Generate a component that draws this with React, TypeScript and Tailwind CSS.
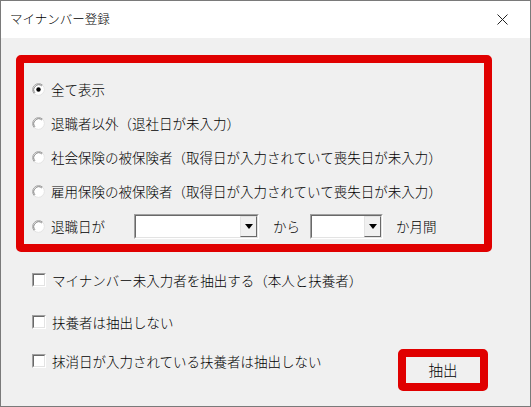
const RED = "border-[#e00000]";

const RADIO_ROWS = [
  "全て表示",
  "退職者以外（退社日が未入力）",
  "社会保険の被保険者（取得日が入力されていて喪失日が未入力）",
  "雇用保険の被保険者（取得日が入力されていて喪失日が未入力）",
];

function Radio({ checked = false }: { checked?: boolean }) {
  return (
    <svg width="13" height="13" viewBox="0 0 13 13" className="shrink-0">
      <circle cx="6.5" cy="6.5" r="6" fill="#fff" />
      <path d="M2.26 10.74 A6 6 0 0 1 10.74 2.26" stroke="#a0a0a0" fill="none" />
      <path d="M10.74 2.26 A6 6 0 0 1 2.26 10.74" stroke="#e3e3e3" fill="none" />
      <path d="M3 9.9 A4.9 4.9 0 0 1 9.9 3" stroke="#696969" strokeWidth="0.8" fill="none" />
      {checked && <circle cx="6.5" cy="6.5" r="2.2" fill="#000" />}
    </svg>
  );
}

function Checkbox() {
  return (
    <div className="w-[14px] h-[14px] shrink-0 border border-t-[#a0a0a0] border-l-[#a0a0a0] border-r-white border-b-white">
      <div className="w-full h-full bg-white border border-t-[#696969] border-l-[#696969] border-r-[#e3e3e3] border-b-[#e3e3e3]" />
    </div>
  );
}

function Combo({ width }: { width: string }) {
  return (
    <div className={`flex h-[25px] ${width} border border-t-[#a0a0a0] border-l-[#a0a0a0] border-r-white border-b-white`}>
      <div className="flex flex-1 border border-t-[#696969] border-l-[#696969] border-r-[#e3e3e3] border-b-[#e3e3e3] bg-white">
        <div className="flex-1" />
        <div className="w-[17px] bg-[#f0f0f0] flex items-center justify-center border border-t-[#e3e3e3] border-l-[#e3e3e3] border-r-[#696969] border-b-[#696969]">
          <svg width="8" height="5" viewBox="0 0 8 5">
            <path d="M0 0 H8 L4 5 Z" fill="#000" />
          </svg>
        </div>
      </div>
    </div>
  );
}

export default function App() {
  return (
    <div className="w-[531px] h-[407px] flex flex-col border border-[#7a7a7a] bg-[#f0f0f0] text-black font-light font-['Noto_Sans_CJK_JP','Noto_Sans',sans-serif] text-[13.5px]">
      {/* title bar */}
      <div className="h-[37px] shrink-0 bg-white flex items-center justify-between pl-[9px] pr-[22px]">
        <span className="text-[12.5px]">マイナンバー登録</span>
        <svg width="11" height="11" viewBox="0 0 11 11">
          <path d="M0.5 0.5 L10.5 10.5 M10.5 0.5 L0.5 10.5" stroke="#222" strokeWidth="1" />
        </svg>
      </div>

      <div className="flex flex-col pt-[17px]">
        {/* extraction mode */}
        <div className={`ml-[15px] w-[476px] h-[197px] border-[8px] ${RED} rounded-[5px] flex flex-col gap-[10px] pt-[14px] pl-[8px]`}>
          {RADIO_ROWS.map((label, i) => (
            <div key={label} className="h-[24px] flex items-center gap-[6px]">
              <Radio checked={i === 0} />
              <span>{label}</span>
            </div>
          ))}
          <div className="h-[25px] mt-[1px] flex items-center">
            <Radio />
            <span className="ml-[6px] w-[83px]">退職日が</span>
            <Combo width="w-[125px]" />
            <span className="ml-[14px] w-[37px]">から</span>
            <Combo width="w-[73px]" />
            <span className="ml-[13px]">か月間</span>
          </div>
        </div>

        <div className="mt-[16px] pl-[31px] h-[24px] flex items-center gap-[6px]">
          <Checkbox />
          <span>マイナンバー未入力者を抽出する（本人と扶養者）</span>
        </div>
        <div className="mt-[18px] pl-[31px] h-[24px] flex items-center gap-[6px]">
          <Checkbox />
          <span>扶養者は抽出しない</span>
        </div>
        <div className="mt-[15px] pl-[31px] pr-[42px] flex items-start justify-between">
          <div className="h-[24px] flex items-center gap-[6px]">
            <Checkbox />
            <span>抹消日が入力されている扶養者は抽出しない</span>
          </div>
          <div className={`w-[90px] h-[42px] border-[8px] ${RED} rounded-[5px] bg-[#f0f0f0] flex items-center justify-center text-[14.5px]`}>
            抽出
          </div>
        </div>
      </div>
    </div>
  );
}
